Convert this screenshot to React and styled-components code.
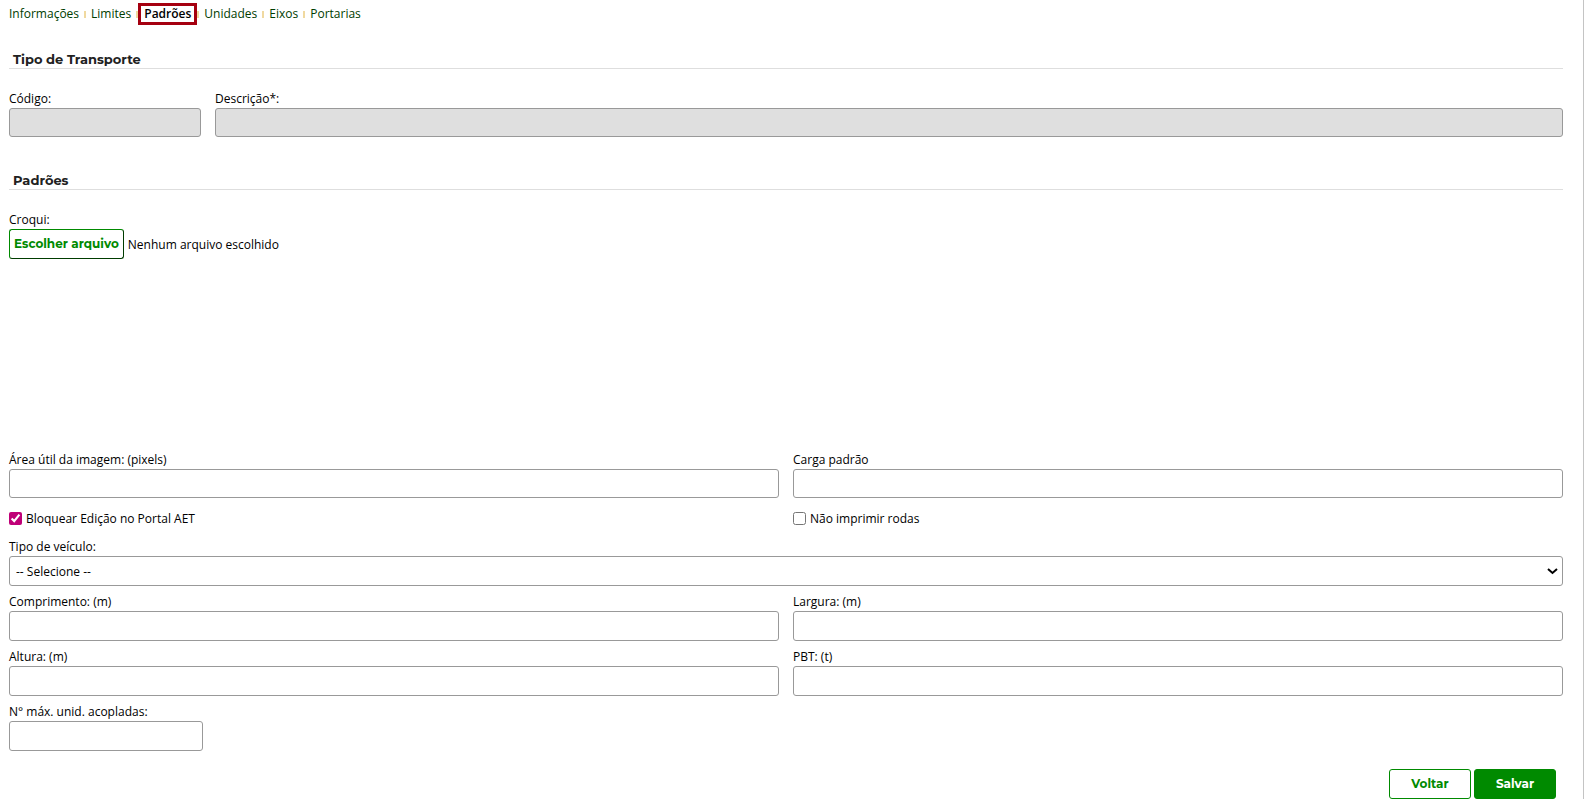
import React, { useRef, useState } from 'react'
import styled, { createGlobalStyle, css } from 'styled-components'

const GlobalStyle = createGlobalStyle`
  *, *::before, *::after {
    box-sizing: border-box;
  }

  body {
    margin: 0;
    background-color: white;
    color: black;
    font: 12px/17px 'Open Sans', sans-serif;
  }
`

const Page = styled.div`
  min-height: 100vh;
  padding: 0 20px 0 9px;
  border-right: 1px solid #c4c4c4;
`

const TabList = styled.ul`
  display: flex;
  align-items: center;
  height: 28px;
  margin: 0;
  padding: 0;
  list-style: none;
`

const TabItem = styled.li`
  display: flex;
  align-items: center;

  &:not(:first-child)::before {
    content: '';
    flex: none;
    width: 2px;
    height: 7px;
    margin-left: ${props => (props.$afterCurrent ? '0' : '5px')};
    margin-right: ${props => (props.$current ? '0' : '5px')};
    background-color: #f0d9a0;
  }
`

const TabLink = styled.a`
  color: #003c00;
  line-height: 16px;
  text-decoration: none;

  &:hover {
    text-decoration: underline;
  }

  ${props => props.$current && css`
    height: 22px;
    padding: 0 3px;
    border: 3px solid #a50010;
    color: black;
    font-weight: 600;
  `}
`

const Section = styled.section`
  padding-top: ${props => (props.$first ? '22px' : '34px')};
`

const SectionTitle = styled.h2`
  margin: 0 0 22px;
  padding: 0 4px;
  border-bottom: 1px solid #dedede;
  color: #212121;
  font: 700 13px/18px Montserrat, Inter, sans-serif;
`

const Rows = styled.div`
  display: flex;
  flex-direction: column;
  gap: 8px;
`

const Row = styled.div`
  display: grid;
  grid-template-columns: ${props => props.$columns || '1fr 1fr'};
  column-gap: 14px;
`

const FieldBox = styled.div`
  display: flex;
  flex-direction: column;
  gap: 2px;
  min-width: 0;
`

const Label = styled.label`
  line-height: 15px;
`

const control = css`
  width: 100%;
  height: ${props => (props.$short ? '29px' : '30px')};
  border: 1px solid #999;
  border-radius: 3px;
  background-color: white;
  color: black;
  font: inherit;
`

const TextInput = styled.input`
  ${control}
  padding: 0 6px;

  &:disabled {
    background-color: #dfdfdf;
  }
`

const SelectBox = styled.div`
  position: relative;

  svg {
    position: absolute;
    top: 12px;
    right: 5px;
    pointer-events: none;
  }
`

const Select = styled.select`
  ${control}
  display: block;
  padding: 0 20px 0 6px;
  appearance: none;
`

const CheckLabel = styled.label`
  display: flex;
  align-items: center;
  gap: 4px;
  height: 25px;
`

const Checkbox = styled.input`
  width: 13px;
  height: 13px;
  margin: 0;
  accent-color: #bf0077;
`

const Button = styled.button`
  height: 30px;
  min-width: 82px;
  padding: 0 4px;
  border: 1px solid #008a00;
  border-radius: 3px;
  background-color: ${props => (props.$primary ? '#008a00' : 'white')};
  color: ${props => (props.$primary ? 'white' : '#008a00')};
  font: 700 12px/16px Montserrat, Inter, sans-serif;
  white-space: nowrap;
  cursor: pointer;
`

const FileButton = styled(Button)`
  min-width: 114px;
  border-color: #008a00 #003c00 #003c00 #008a00;
`

const FileRow = styled.div`
  display: flex;
  align-items: center;
  gap: 4px;
`

const Preview = styled.div`
  height: 177px;
`

const Actions = styled.div`
  display: flex;
  justify-content: flex-end;
  gap: 3px;
  padding: 18px 7px 0 0;
`

const tabs = ['Informações', 'Limites', 'Padrões', 'Unidades', 'Eixos', 'Portarias']
const currentTab = 2

const Field = ({ id, label, ...rest }) => (
  <FieldBox>
    <Label htmlFor={id}>{label}</Label>
    <TextInput id={id} name={id} type='text' {...rest} />
  </FieldBox>
)

const FilePicker = ({ id, label }) => {
  const input = useRef(null)
  const [fileName, setFileName] = useState('')

  return (
    <FieldBox>
      <Label htmlFor={id}>{label}</Label>
      <FileRow>
        <FileButton id={id} type='button' onClick={() => input.current.click()}>
          Escolher arquivo
        </FileButton>
        <span>{fileName || 'Nenhum arquivo escolhido'}</span>
        <input
          ref={input}
          type='file'
          accept='image/*'
          hidden
          onChange={e => setFileName(e.target.files[0] ? e.target.files[0].name : '')}
        />
      </FileRow>
    </FieldBox>
  )
}

const App = () => (
  <>
    <GlobalStyle />
    <Page>
      <nav>
        <TabList>
          {tabs.map((tab, i) => (
            <TabItem key={tab} $current={i === currentTab} $afterCurrent={i === currentTab + 1}>
              <TabLink href='#' $current={i === currentTab}>{tab}</TabLink>
            </TabItem>
          ))}
        </TabList>
      </nav>
      <form onSubmit={e => e.preventDefault()}>
        <Section $first>
          <SectionTitle>Tipo de Transporte</SectionTitle>
          <Row $columns='192px 1fr'>
            <Field id='codigo' label='Código:' disabled $short />
            <Field id='descricao' label='Descrição*:' disabled $short />
          </Row>
        </Section>
        <Section>
          <SectionTitle>Padrões</SectionTitle>
          <Rows>
            <FilePicker id='croqui' label='Croqui:' />
            <Preview />
            <Row>
              <Field id='areaUtil' label='Área útil da imagem: (pixels)' $short />
              <Field id='cargaPadrao' label='Carga padrão' $short />
            </Row>
            <Row>
              <CheckLabel>
                <Checkbox type='checkbox' name='bloquearEdicao' defaultChecked />
                Bloquear Edição no Portal AET
              </CheckLabel>
              <CheckLabel>
                <Checkbox type='checkbox' name='naoImprimirRodas' />
                Não imprimir rodas
              </CheckLabel>
            </Row>
            <FieldBox>
              <Label htmlFor='tipoVeiculo'>Tipo de veículo:</Label>
              <SelectBox>
                <Select id='tipoVeiculo' name='tipoVeiculo'>
                  <option value=''>-- Selecione --</option>
                </Select>
                <svg width='11' height='7' viewBox='0 0 11 7' aria-hidden='true'>
                  <path d='M1 1l4.5 4L10 1' fill='none' stroke='black' strokeWidth='2' />
                </svg>
              </SelectBox>
            </FieldBox>
            <Row>
              <Field id='comprimento' label='Comprimento: (m)' />
              <Field id='largura' label='Largura: (m)' />
            </Row>
            <Row>
              <Field id='altura' label='Altura: (m)' />
              <Field id='pbt' label='PBT: (t)' />
            </Row>
            <Row $columns='194px'>
              <Field id='maxUnidades' label='N° máx. unid. acopladas:' />
            </Row>
          </Rows>
        </Section>
        <Actions>
          <Button type='button'>Voltar</Button>
          <Button type='submit' $primary>Salvar</Button>
        </Actions>
      </form>
    </Page>
  </>
)

export default App
